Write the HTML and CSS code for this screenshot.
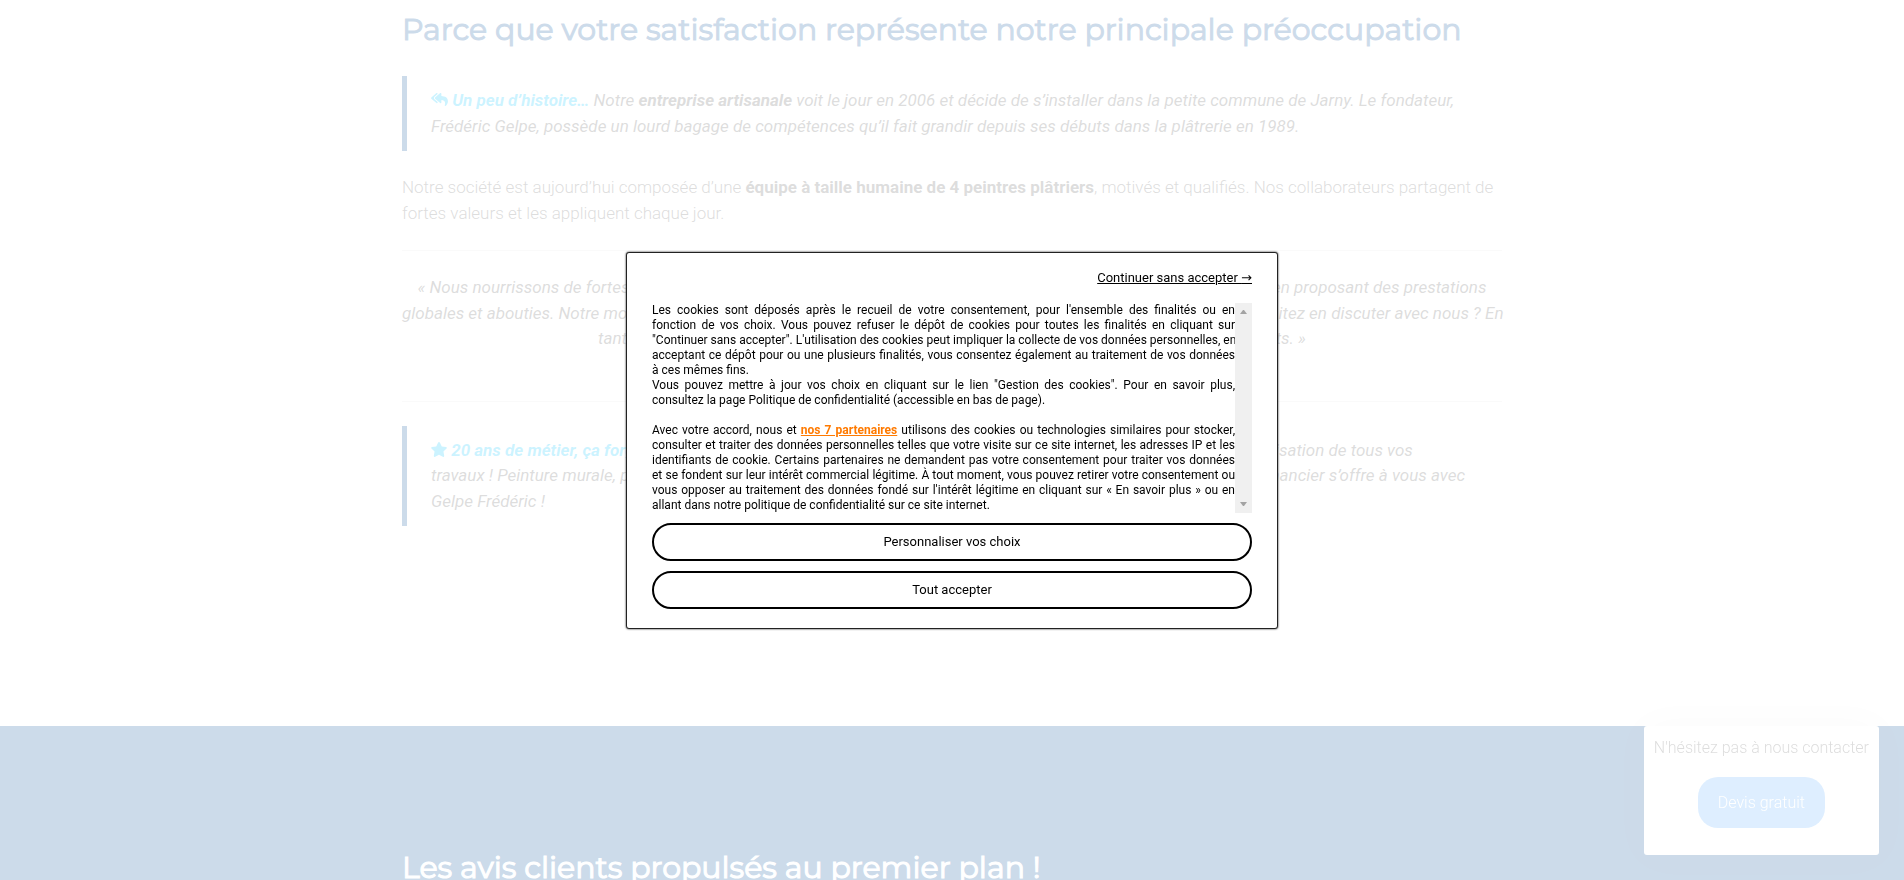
FILE: index.html
```html
<!DOCTYPE html>
<html lang="fr">
<head>
<meta charset="utf-8">
<title>Gelpe Frédéric – Peintre plâtrier à Jarny</title>
<link rel="stylesheet" href="styles.css">
</head>
<body>
<main>
  <section class="about">
    <div class="container">
      <h2 class="title">Parce que votre satisfaction représente notre principale préoccupation</h2>
      <blockquote class="note">
        <strong class="lead"><svg class="icon" viewBox="0 0 576 512" aria-hidden="true"><path d="M136.309 189.836L312.313 37.851C327.72 24.546 352 35.348 352 56.015v82.763c129.182 10.231 224 52.212 224 183.548 0 61.441-39.582 122.309-83.333 154.132-13.653 9.931-33.111-2.533-28.077-18.631 38.512-123.162-3.922-169.482-112.59-182.015v84.175c0 20.701-24.3 31.453-39.687 18.164L136.309 226.164c-11.071-9.561-11.086-26.753 0-36.328zm-128 36.328L184.313 378.15C199.7 391.439 224 380.687 224 359.986v-15.818l-108.606-93.785A55.96 55.96 0 0 1 96 207.998a55.953 55.953 0 0 1 19.393-42.38L224 71.832V56.015c0-20.667-24.28-31.469-39.687-18.164L8.309 189.836c-11.086 9.575-11.071 26.767 0 36.328z"/></svg> Un peu d’histoire…</strong> Notre <strong>entreprise artisanale</strong> voit le jour en 2006 et décide de s’installer dans la petite commune de Jarny. Le fondateur, Frédéric Gelpe, possède un lourd bagage de compétences qu’il fait grandir depuis ses débuts dans la plâtrerie en 1989.
      </blockquote>
      <p class="text">Notre société est aujourd’hui composée d’une <strong>équipe à taille humaine de 4 peintres plâtriers</strong>, motivés et qualifiés. Nos collaborateurs partagent de fortes valeurs et les appliquent chaque jour.</p>
      <p class="quote">« Nous nourrissons de fortes ambitions et souhaitons satisfaire chacun de nos clients dans leurs projets de peinture en proposant des prestations<br>globales et abouties. Notre mot d’ordre est la qualité pour un bel intérieur chaleureux et qui vous ressemble. Vous souhaitez en discuter avec nous ? En<br>tant qu’artisans qualifiés, nous sommes à votre écoute pour réaliser tous vos nouveaux projets. »</p>
      <blockquote class="note">
        <strong class="lead"><svg class="icon icon-star" viewBox="20 0 536 512" aria-hidden="true"><path d="M259 18 194 150 48 171c-26 4-36 36-17 54l105 103-25 145c-4 26 23 46 46 34l131-68 131 68c23 12 50-8 46-34l-25-145 105-103c19-18 9-50-17-54l-146-21L317 18c-12-24-46-24-58 0z"/></svg> 20 ans de métier, ça forge l’expérience !</strong> Nous mettons tout notre savoir-faire reconnu à votre service pour la réalisation de tous vos<br>travaux ! Peinture murale, plâtrerie, isolation, et décoration intérieure : un accompagnement esthétique, humain et financier s’offre à vous avec<br>Gelpe Frédéric !
      </blockquote>
    </div>
  </section>
  <section class="reviews">
    <div class="container">
      <h2 class="title title-light">Les avis clients propulsés au premier plan !</h2>
    </div>
  </section>
</main>

<aside class="contact">
  <p class="contact-text">N'hésitez pas à nous contacter</p>
  <a class="contact-link" href="#devis">Devis gratuit</a>
</aside>

<div class="overlay">
  <div class="dialog" role="dialog" aria-modal="true" aria-label="Gestion des cookies">
    <a class="skip" href="#continuer">Continuer sans accepter <span class="skip-arrow">→</span></a>
    <div class="scroller">
      <div class="policy">
        <p>
          <span class="line">Les cookies sont déposés après le recueil de votre consentement, pour l'ensemble des finalités ou en</span>
          <span class="line">fonction de vos choix. Vous pouvez refuser le dépôt de cookies pour toutes les finalités en cliquant sur</span>
          <span class="line">"Continuer sans accepter". L'utilisation des cookies peut impliquer la collecte de vos données personnelles, en</span>
          <span class="line">acceptant ce dépôt pour ou une plusieurs finalités, vous consentez également au traitement de vos données</span>
          à ces mêmes fins.
        </p>
        <p>Vous pouvez mettre à jour vos choix en cliquant sur le lien "Gestion des cookies". Pour en savoir plus, consultez la page Politique de confidentialité (accessible en bas de page).</p>
        <p class="spaced">Avec votre accord, nous et <a class="partners" href="#partenaires">nos 7 partenaires</a> utilisons des cookies ou technologies similaires pour stocker, consulter et traiter des données personnelles telles que votre visite sur ce site internet, les adresses IP et les identifiants de cookie. Certains partenaires ne demandent pas votre consentement pour traiter vos données et se fondent sur leur intérêt commercial légitime. À tout moment, vous pouvez retirer votre consentement ou vous opposer au traitement des données fondé sur l'intérêt légitime en cliquant sur « En savoir plus » ou en allant dans notre politique de confidentialité sur ce site internet.</p>
      </div>
      <div class="track" aria-hidden="true">
        <svg class="arrow" viewBox="0 0 7 4"><path d="M0 4h7L4 0H3z"/></svg>
        <svg class="arrow" viewBox="0 0 7 4"><path d="M0 0h7L4 4H3z"/></svg>
      </div>
    </div>
    <div class="actions">
      <button class="action" type="button">Personnaliser vos choix</button>
      <button class="action" type="button">Tout accepter</button>
    </div>
  </div>
</div>
</body>
</html>
```

FILE: styles.css
```css
* {
  box-sizing: border-box;
}

body {
  margin: 0;
  overflow: hidden;
  background: #fff;
  color: #555;
  font: 300 17px/1.5 Roboto, "Liberation Sans", sans-serif;
}

p,
h2,
blockquote {
  margin: 0;
}

strong {
  font-weight: 700;
}

.container {
  width: 100%;
  max-width: 1100px;
  margin: 0 auto;
}

.about {
  padding: 8px 0 200px;
}

.title {
  color: #004b96;
  font: 400 30px/44px Montserrat, Inter, sans-serif;
  -webkit-text-stroke: 1px currentColor;
}

.note {
  margin-top: 24px;
  padding: 12px 0 12px 24px;
  border-left: 5px solid #004b96;
  font-weight: 400;
  font-style: italic;
}

.lead {
  color: #00c3ff;
}

.icon {
  display: inline-block;
  width: 17px;
  height: 15px;
  fill: currentColor;
  vertical-align: -1px;
}

.icon-star {
  width: 16px;
}

.text {
  margin-top: 24px;
}

.quote {
  margin-top: 24px;
  padding: 24px 0 49px;
  border: solid #e4e4e4;
  border-width: 1px 0;
  font-weight: 400;
  font-style: italic;
  text-align: center;
  white-space: nowrap;
}

.reviews {
  padding-top: 120px;
  background: #004b96;
}

.title-light {
  color: #fff;
}

.contact {
  position: fixed;
  right: 25px;
  bottom: 25px;
  display: flex;
  flex-direction: column;
  align-items: center;
  gap: 17px;
  padding: 10px 10px 27px;
  border-radius: 3px;
  background: #fff;
  box-shadow: 0 0 40px rgba(0, 0, 0, 0.1);
  font-size: 16px;
}

.contact-link {
  padding: 13px 20px;
  border-radius: 20px;
  background: #5aaaff;
  color: #fff;
  line-height: 25px;
  text-decoration: none;
}

.overlay {
  position: fixed;
  inset: 0;
  display: flex;
  align-items: center;
  justify-content: center;
  background: rgba(255, 255, 255, 0.8);
}

.dialog {
  display: flex;
  flex-direction: column;
  width: 652px;
  max-width: 100%;
  padding: 15px 25px 19px;
  border: 1px solid #222;
  border-radius: 3px;
  background: #fff;
  box-shadow: 0 0 2px #000;
  color: #000;
  font-size: 13px;
  font-weight: 400;
}

.skip {
  align-self: flex-end;
  color: #000;
  line-height: 20px;
}

.skip-arrow {
  font-family: "DejaVu Sans", sans-serif;
}

.scroller {
  display: flex;
  margin-top: 15px;
}

.policy {
  flex: 1;
  min-width: 0;
  font-size: 12px;
  line-height: 15px;
  text-align: justify;
}

.line {
  display: block;
  text-align-last: justify;
  white-space: nowrap;
}

.spaced {
  margin-top: 15px;
}

.partners {
  color: #ff7a00;
  font-weight: 700;
}

.track {
  display: flex;
  flex-direction: column;
  align-items: center;
  justify-content: space-between;
  width: 17px;
  padding: 7px 0;
  background: #f0f0f0;
}

.arrow {
  width: 7px;
  height: 4px;
  fill: #a3a3a3;
}

.actions {
  display: flex;
  flex-direction: column;
  gap: 10px;
  margin-top: 10px;
}

.action {
  height: 38px;
  border: 2px solid #000;
  border-radius: 19px;
  background: #fff;
  color: #000;
  font: inherit;
}
```
